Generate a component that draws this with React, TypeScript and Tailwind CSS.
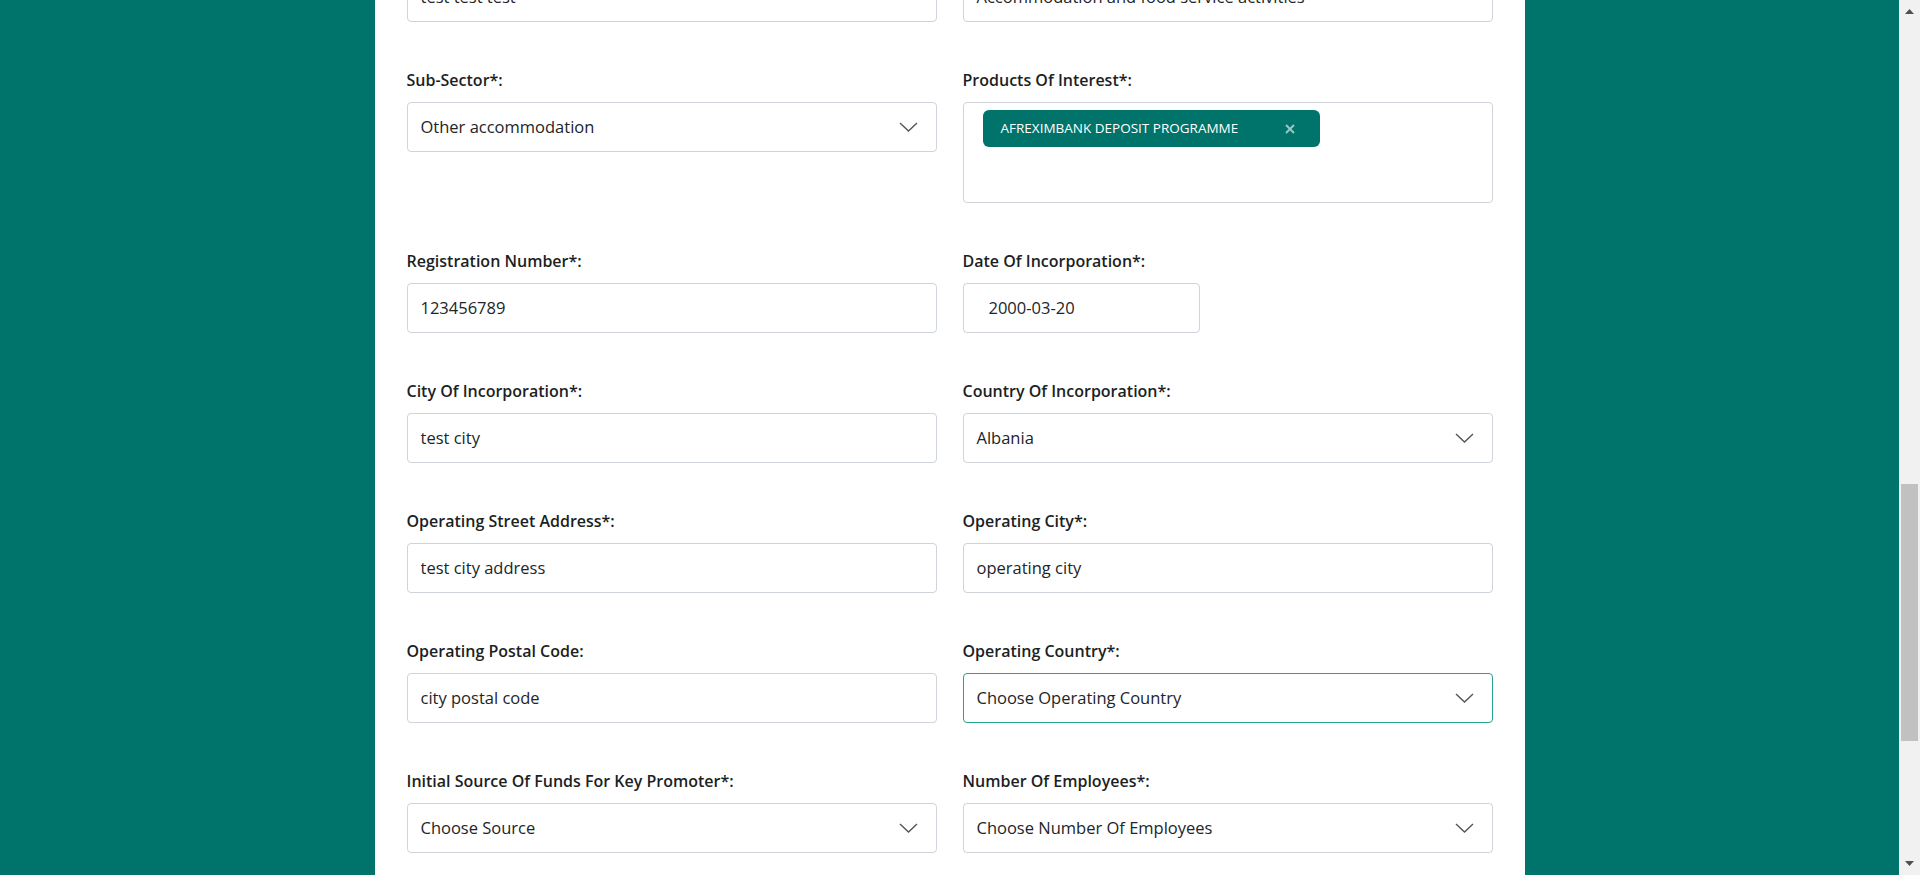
import React from "react";

const font = { fontFamily: '"Open Sans", "Noto Sans", Arial, sans-serif' };

function Chevron() {
  return (
    <svg
      className="absolute right-[18px] top-1/2 -translate-y-1/2"
      width="19"
      height="11"
      viewBox="0 0 19 11"
      fill="none"
    >
      <polyline points="1,1.5 9.5,9.5 18,1.5" stroke="#555" strokeWidth="1.4" />
    </svg>
  );
}

function Label({ children }: { children: React.ReactNode }) {
  return (
    <div className="mb-[10px] h-[24px] text-[16px] leading-[24px] font-semibold text-[#1c1f23]">
      {children}
    </div>
  );
}

function TextInput({ value }: { value: string }) {
  return (
    <div className="flex h-[50px] items-center rounded-[4px] border border-[#ced4da] bg-white px-[13px] text-[16.5px] text-[#212529]">
      {value}
    </div>
  );
}

function SelectBox({ value, focused }: { value: string; focused?: boolean }) {
  return (
    <div
      className={
        focused
          ? "relative flex h-[50px] items-center rounded-[4px] border border-[#22a58e] bg-white px-[13px] text-[16.5px] text-[#212529]"
          : "relative flex h-[50px] items-center rounded-[4px] border border-[#ced4da] bg-white px-[13px] text-[16.5px] text-[#212529]"
      }
    >
      {value}
      <Chevron />
    </div>
  );
}

function Field({ label, children }: { label: string; children: React.ReactNode }) {
  return (
    <div className="flex flex-col">
      <Label>{label}</Label>
      {children}
    </div>
  );
}

export default function App() {
  return (
    <div className="flex h-[875px] w-full overflow-hidden bg-[#00736b]" style={font}>
      <div className="flex min-w-0 flex-1 justify-center">
        <div className="h-full w-[1150px] shrink-0 bg-white px-[32px]">
          <div className="-mt-[62px] grid grid-cols-2 gap-x-[26px] gap-y-[46px]">
            <Field label="Company Name*:">
              <TextInput value="test test test" />
            </Field>
            <Field label="Sector*:">
              <div className="relative flex h-[50px] items-center rounded-[4px] border border-[#ced4da] bg-white px-[13px] text-[16.5px] text-[#212529]">
                Accommodation and food service activities
                <svg
                  className="absolute right-[24px] top-1/2 -translate-y-1/2"
                  width="9"
                  height="6"
                  viewBox="0 0 9 6"
                >
                  <polygon points="0,0 9,0 4.5,5" fill="#444" />
                </svg>
              </div>
            </Field>

            <Field label="Sub-Sector*:">
              <SelectBox value="Other accommodation" />
            </Field>
            <Field label="Products Of Interest*:">
              <div className="h-[101px] rounded-[4px] border border-[#ced4da] bg-white pl-[19px] pt-[7px]">
                <div className="flex h-[37px] w-[337px] items-center justify-between rounded-[6px] bg-[#00736b] pl-[18px] pr-[25px] text-[13.5px] text-white">
                  <span>AFREXIMBANK DEPOSIT PROGRAMME</span>
                  <svg width="10" height="10" viewBox="0 0 10 10">
                    <path
                      d="M1 1 L9 9 M9 1 L1 9"
                      stroke="rgba(255,255,255,0.6)"
                      strokeWidth="2"
                    />
                  </svg>
                </div>
              </div>
            </Field>

            <Field label="Registration Number*:">
              <TextInput value="123456789" />
            </Field>
            <Field label="Date Of Incorporation*:">
              <div className="flex h-[50px] w-[237px] items-center rounded-[4px] border border-[#ced4da] bg-white pl-[25px] text-[16.5px] text-[#212529]">
                2000-03-20
              </div>
            </Field>

            <Field label="City Of Incorporation*:">
              <TextInput value="test city" />
            </Field>
            <Field label="Country Of Incorporation*:">
              <SelectBox value="Albania" />
            </Field>

            <Field label="Operating Street Address*:">
              <TextInput value="test city address" />
            </Field>
            <Field label="Operating City*:">
              <TextInput value="operating city" />
            </Field>

            <Field label="Operating Postal Code:">
              <TextInput value="city postal code" />
            </Field>
            <Field label="Operating Country*:">
              <SelectBox value="Choose Operating Country" focused />
            </Field>

            <Field label="Initial Source Of Funds For Key Promoter*:">
              <SelectBox value="Choose Source" />
            </Field>
            <Field label="Number Of Employees*:">
              <SelectBox value="Choose Number Of Employees" />
            </Field>
          </div>
        </div>
      </div>
      <div className="relative h-full w-[21px] shrink-0 bg-[#f1f1f1]">
        <svg className="absolute left-[6px] top-[9px]" width="9" height="5" viewBox="0 0 9 5">
          <polygon points="0,5 9,5 4.5,0" fill="#505050" />
        </svg>
        <div className="absolute left-[2px] top-[484px] h-[257px] w-[17px] bg-[#c1c1c1]" />
        <svg className="absolute left-[6px] top-[861px]" width="9" height="5" viewBox="0 0 9 5">
          <polygon points="0,0 9,0 4.5,5" fill="#505050" />
        </svg>
      </div>
    </div>
  );
}
